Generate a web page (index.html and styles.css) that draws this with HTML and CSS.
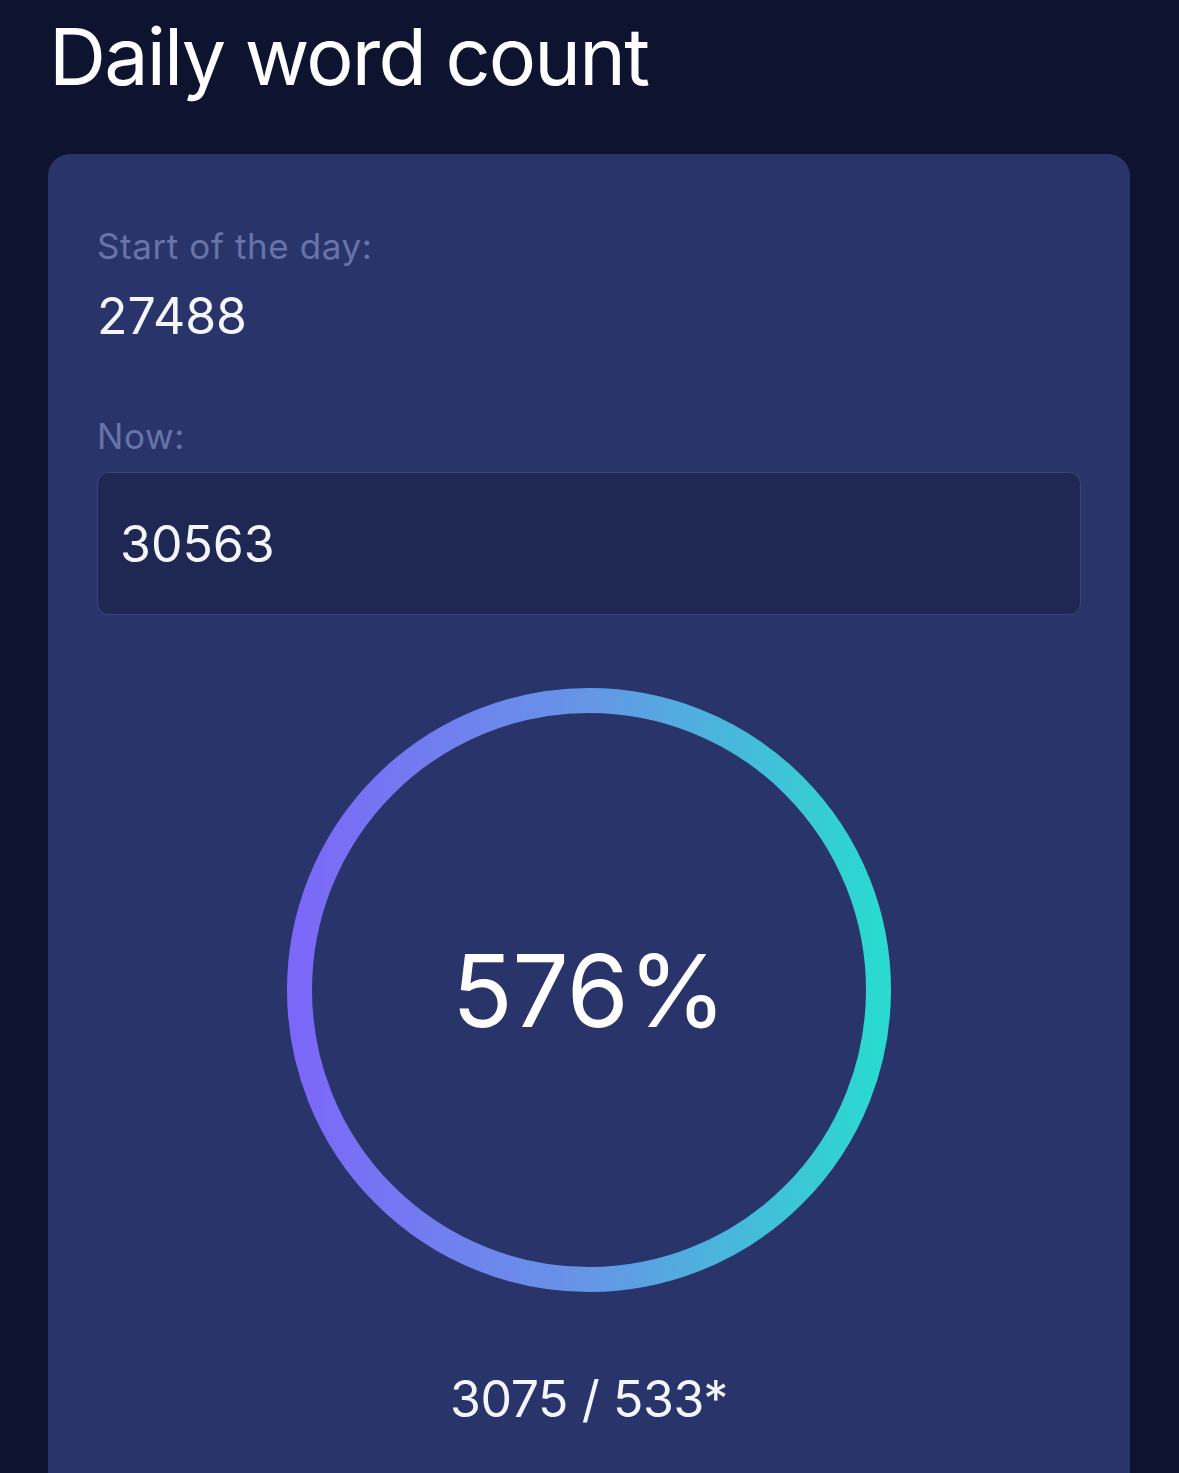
FILE: index.html
```html
<!DOCTYPE html>
<html>
<head>
<meta charset="utf-8">
<link rel="stylesheet" href="styles.css">
</head>
<body>
<main class="page">
  <h1 class="title">Daily word count</h1>
  <section class="card">
    <div class="field">
      <div class="label">Start of the day:</div>
      <div class="value">27488</div>
    </div>
    <div class="field field-now">
      <div class="label">Now:</div>
      <div class="input">30563</div>
    </div>
    <div class="ring-wrap">
      <svg class="ring" width="604" height="604" viewBox="0 0 604 604">
        <defs>
          <linearGradient id="g" x1="0" y1="0" x2="1" y2="0">
            <stop offset="0" stop-color="#7c68f8"/>
            <stop offset="0.5" stop-color="#6596e6"/>
            <stop offset="1" stop-color="#2adad0"/>
          </linearGradient>
        </defs>
        <circle cx="302" cy="302" r="289.5" fill="none" stroke="url(#g)" stroke-width="25"/>
      </svg>
      <div class="percent">576%</div>
    </div>
    <div class="summary">3075 / 533*</div>
  </section>
</main>
</body>
</html>
```
FILE: styles.css
```css
html, body {
  margin: 0;
  padding: 0;
  background: #0e1430;
  font-family: Inter, "Noto Sans", sans-serif;
  color: #ffffff;
}
.page {
  padding: 11px 49px 0 48px;
  height: 1473px;
  overflow: hidden;
  box-sizing: border-box;
}
.title {
  margin: 0 0 0 1px;
  font-weight: 400;
  font-size: 79px;
  line-height: 90px;
  letter-spacing: -1.8px;
}
.card {
  margin-top: 53px;
  background: #29356a;
  border-radius: 22px;
  padding: 70px 49px 80px 49px;
  height: 1400px;
  box-sizing: border-box;
}
.label {
  color: #6774a8;
  font-size: 35px;
  line-height: 44px;
  letter-spacing: 0.6px;
}
.value {
  margin-top: 18px;
  font-size: 50px;
  line-height: 60px;
  color: #f4f6ff;
}
.field-now {
  margin-top: 68px;
}
.input {
  margin-top: 14px;
  height: 143px;
  box-sizing: border-box;
  background: #1f2852;
  border: 1.5px solid #3a4679;
  border-radius: 12px;
  padding-left: 22px;
  display: flex;
  align-items: center;
  font-size: 50px;
  color: #f4f6ff;
}
.ring-wrap {
  position: relative;
  margin-top: 73px;
  display: flex;
  justify-content: center;
  align-items: center;
}
.ring {
  display: block;
}
.percent {
  position: absolute;
  left: 0;
  right: 0;
  top: 0;
  bottom: 0;
  display: flex;
  justify-content: center;
  align-items: center;
  font-size: 100px;
  letter-spacing: -0.5px;
}
.summary {
  margin-top: 77px;
  text-align: center;
  font-size: 50px;
  line-height: 60px;
  color: #f4f6ff;
  letter-spacing: -0.4px;
}
```
